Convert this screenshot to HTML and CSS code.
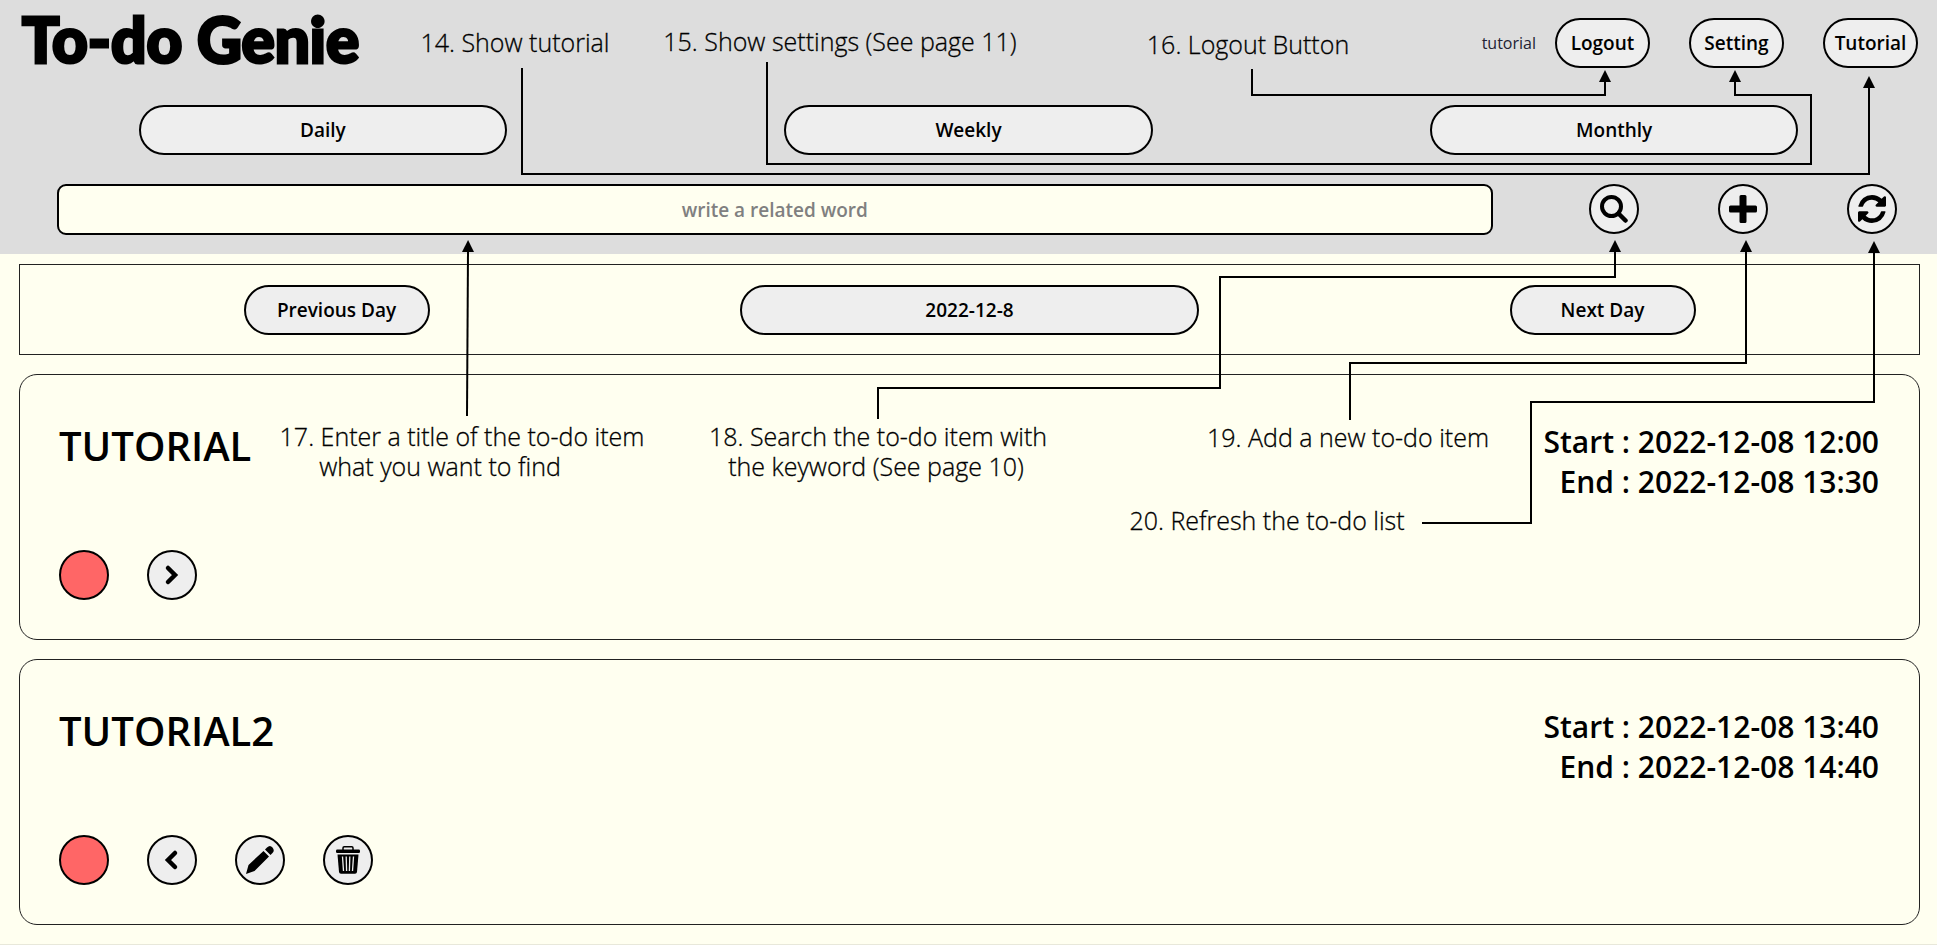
FILE: index.html
```html
<!DOCTYPE html>
<html lang="en">
<head>
<meta charset="utf-8">
<title>To-do Genie</title>
<link rel="stylesheet" href="styles.css">
</head>
<body>
<div class="page">
  <header class="header">
    <div class="topbar">
      <h1 class="logo">To-do Genie</h1>
      <div class="account">
        <span class="user">tutorial</span>
        <button class="pill small" type="button">Logout</button>
        <button class="pill small" type="button">Setting</button>
        <button class="pill small" type="button">Tutorial</button>
      </div>
    </div>
    <nav class="views">
      <button class="pill view" type="button">Daily</button>
      <button class="pill view" type="button">Weekly</button>
      <button class="pill view" type="button">Monthly</button>
    </nav>
    <form class="search">
      <div class="field"><input class="query" type="text" placeholder="write a related word" aria-label="Search word"></div>
      <button class="round" type="button" aria-label="Search">
        <svg class="icon" viewBox="0 0 28 28"><circle cx="11.500" cy="11.500" r="9.500" fill="none" stroke="currentColor" stroke-width="4"/><path d="M18.500 18.500 25.500 25.500" stroke="currentColor" stroke-width="4.500" stroke-linecap="round"/></svg>
      </button>
      <button class="round" type="button" aria-label="Add">
        <svg class="icon" viewBox="0 0 28 28"><path fill="currentColor" d="M12 0h4q1.500 0 1.500 1.500v9h9q1.500 0 1.500 1.500v4q0 1.500-1.500 1.500h-9v9q0 1.500-1.500 1.500h-4q-1.500 0-1.500-1.500v-9h-9Q0 17.500 0 16v-4q0-1.500 1.500-1.500h9v-9Q10.500 0 12 0z"/></svg>
      </button>
      <button class="round" type="button" aria-label="Refresh">
        <svg class="icon" viewBox="0 0 1536 1536"><path fill="currentColor" d="M1511 928q0 5-1 7-64 268-268 434.500T764 1536q-146 0-282.500-55T238 1324l-129 129q-19 19-45 19t-45-19-19-45V960q0-26 19-45t45-19h448q26 0 45 19t19 45-19 45l-137 137q71 66 161 102t187 36q134 0 250-65t186-179q11-17 53-117 8-23 30-23h192q13 0 22.500 9.500t9.500 22.500zm25-800v448q0 26-19 45t-45 19h-448q-26 0-45-19t-19-45 19-45l138-138Q969 256 768 256q-134 0-250 65T332 500q-11 17-53 117-8 23-30 23H50q-13 0-22.500-9.500T18 608v-7q65-268 270-434.500T768 0q146 0 284 55.500T1297 212l130-129q19-19 45-19t45 19 19 45z"/></svg>
      </button>
    </form>
  </header>

  <main class="content">
    <section class="days">
      <button class="pill step" type="button">Previous Day</button>
      <button class="pill date" type="button">2022-12-8</button>
      <button class="pill step" type="button">Next Day</button>
    </section>

    <article class="card">
      <div class="info">
        <h2 class="title">TUTORIAL</h2>
        <p class="times">Start : 2022-12-08 12:00<br>End : 2022-12-08 13:30</p>
      </div>
      <div class="actions">
        <button class="round status" type="button" aria-label="Not done"></button>
        <button class="round" type="button" aria-label="Show more">
          <svg class="icon" viewBox="0 0 28 28"><path d="M10 7l7 7-7 7" fill="none" stroke="currentColor" stroke-width="4.500" stroke-linecap="round"/></svg>
        </button>
      </div>
    </article>

    <article class="card">
      <div class="info">
        <h2 class="title">TUTORIAL2</h2>
        <p class="times">Start : 2022-12-08 13:40<br>End : 2022-12-08 14:40</p>
      </div>
      <div class="actions">
        <button class="round status" type="button" aria-label="Not done"></button>
        <button class="round" type="button" aria-label="Show less">
          <svg class="icon" viewBox="0 0 28 28"><path d="M17 7l-7 7 7 7" fill="none" stroke="currentColor" stroke-width="4.500" stroke-linecap="round"/></svg>
        </button>
        <button class="round" type="button" aria-label="Edit">
          <svg class="icon" viewBox="0 0 28 28"><path fill="currentColor" d="M0 28 2.500 19 17.500 5 23 10.500 8.500 25zM19 3.500 21 1.500q3-3 5.500 0t0 5.500L24.500 9z"/></svg>
        </button>
        <button class="round" type="button" aria-label="Delete">
          <svg class="icon" viewBox="0 0 28 28"><path d="M9 4V2q0-1.200 1.200-1.200h7.600Q19 .8 19 2v2" fill="none" stroke="currentColor" stroke-width="1.500"/><rect x="2" y="3.500" width="24" height="3.500" rx="1.200" fill="currentColor"/><path fill="currentColor" d="M3.500 8.500h21L23 26q-.2 1.800-2 1.800H7Q5.200 27.800 5 26z"/><path d="M8.500 10.500 9.500 25M12.200 10.500l.4 14.500M15.800 10.500l-.4 14.500M19.500 10.500 18.500 25" stroke="#eee" stroke-width="1.300"/></svg>
        </button>
      </div>
    </article>
  </main>

  <svg class="notes" viewBox="0 0 1937 945">
    <defs>
      <marker id="tip" markerUnits="userSpaceOnUse" markerWidth="12" markerHeight="12" refX="0" refY="6" orient="auto"><path d="M0 0 12 6 0 12z"/></marker>
    </defs>
    <g class="lines">
      <path d="M522 68V174H1869V88"/>
      <path d="M767 62V164H1811V95H1735V82"/>
      <path d="M1252 69V95H1605V82"/>
      <path d="M467 416 468 252"/>
      <path d="M878 419V388H1220V277H1615V252"/>
      <path d="M1350 420V363H1746V252"/>
      <path d="M1422 523H1531V402H1874V253"/>
    </g>
    <g class="labels">
      <text x="515" y="52">14. Show tutorial</text>
      <text x="840" y="51">15. Show settings (See page 11)</text>
      <text x="1248" y="54">16. Logout Button</text>
      <text><tspan x="462" y="446">17. Enter a title of the to-do item</tspan><tspan x="440" y="476">what you want to find</tspan></text>
      <text><tspan x="878" y="446">18. Search the to-do item with</tspan><tspan x="876" y="476">the keyword (See page 10)</tspan></text>
      <text x="1348" y="447">19. Add a new to-do item</text>
      <text x="1267" y="530">20. Refresh the to-do list</text>
    </g>
  </svg>
</div>
</body>
</html>
```
FILE: styles.css
```css
* { box-sizing: border-box; }
body {
  margin: 0;
  background: #fffff0;
  color: #000;
  font-family: "Open Sans", "Noto Sans", sans-serif;
}
.page { position: relative; border-bottom: 1px solid #e8e8da; }
.header { background: #ddd; padding: 18px 0 19px; }
.topbar {
  display: flex;
  justify-content: space-between;
  align-items: center;
  height: 50px;
  padding: 0 19px 0 22px;
}
.logo {
  margin: 0;
  font-family: Lato, sans-serif;
  font-size: 62px;
  font-weight: 900;
  line-height: 44px;
  padding-bottom: 8px;
  -webkit-text-stroke: 3px #000;
}
.account { display: flex; align-items: center; }
.user { font-size: 16px; color: #223; }
.pill, .round {
  height: 50px;
  padding: 0;
  border: 2px solid #000;
  border-radius: 25px;
  background: #eee;
  color: #000;
  font-family: inherit;
  font-size: 19px;
  font-weight: 600;
}
.small { width: 95px; margin-left: 39px; }
.user + .small { margin-left: 19px; }
.views {
  display: grid;
  grid-template-columns: repeat(3, 1fr);
  justify-items: center;
  margin-top: 37px;
}
.view { width: 57%; }
.search {
  display: grid;
  grid-template-columns: 12fr 1fr 1fr 1fr;
  justify-items: center;
  margin-top: 29px;
}
.field { width: 100%; padding: 0 57px; }
.query {
  display: block;
  width: 100%;
  height: 51px;
  border: 2px solid #000;
  border-radius: 9px;
  background: #fffff0;
  font-family: inherit;
  font-size: 19px;
  font-weight: 600;
  text-align: center;
}
.query::placeholder { color: #808080; opacity: 1; }
.round {
  display: flex;
  align-items: center;
  justify-content: center;
  width: 50px;
}
.icon { width: 28px; height: 28px; }
.status { background: #f66; }
.content {
  display: flex;
  flex-direction: column;
  gap: 19px;
  padding: 10px 17px 19px 19px;
}
.days {
  display: grid;
  grid-template-columns: repeat(3, 1fr);
  justify-items: center;
  align-items: center;
  padding: 20px 0 19px;
  border: 1px solid #222;
}
.step { width: 186px; }
.date { width: 459px; }
.card {
  display: flex;
  flex-direction: column;
  justify-content: space-between;
  min-height: 266px;
  padding: 47px 40px 39px 39px;
  border: 1px solid #222;
  border-radius: 18px;
}
.info { display: flex; justify-content: space-between; }
.title, .times { margin: 0; font-weight: 600; }
.title { font-size: 40px; line-height: 48px; }
.times { font-size: 30px; line-height: 40px; text-align: right; }
.actions { display: flex; gap: 38px; }
.notes {
  position: absolute;
  top: 0;
  left: 0;
  width: 100%;
  pointer-events: none;
}
.lines path { fill: none; stroke: #000; stroke-width: 2; marker-end: url(#tip); }
.labels text {
  text-anchor: middle;
  font-size: 25px;
  font-weight: 300;
  stroke: #000;
  stroke-width: 0.3px;
}
```
